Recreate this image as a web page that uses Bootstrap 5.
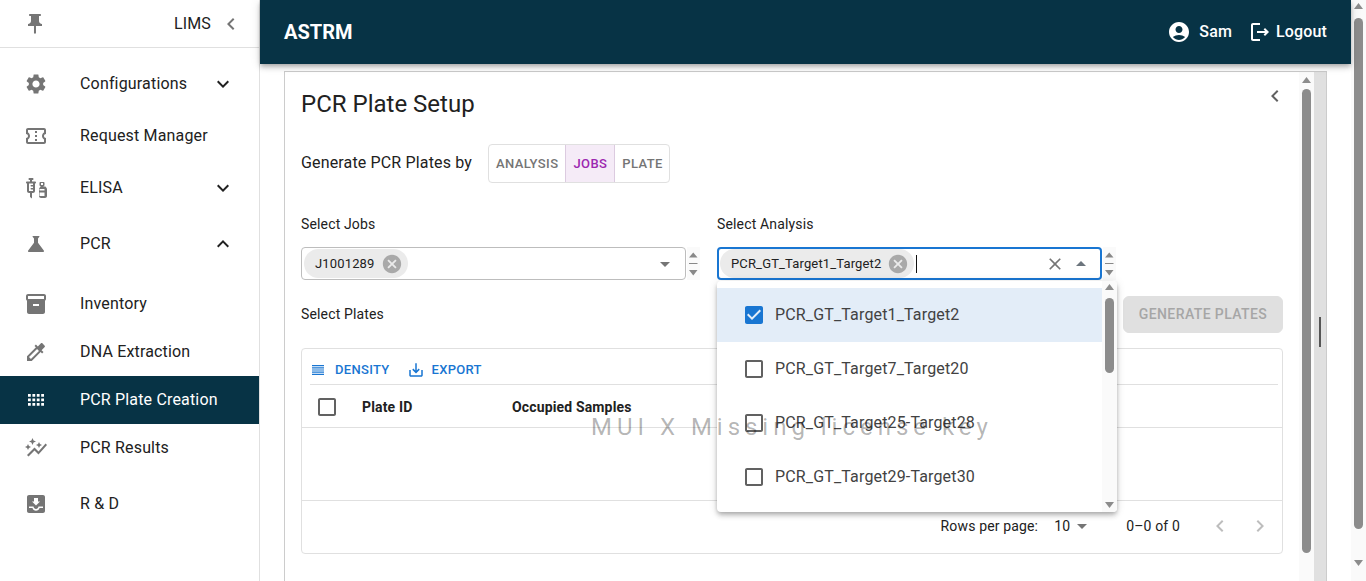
<!DOCTYPE html>
<html lang="en">
<head>
    <meta charset="UTF-8" />
    <title>ASTRM - PCR Plate Setup</title>
    <link href="https://cdn.jsdelivr.net/npm/bootstrap@5.3.3/dist/css/bootstrap.min.css" rel="stylesheet">
    <style>
        html, body { height: 581px; overflow: hidden; }
        body { font-family: Roboto, "Liberation Sans", sans-serif; color: #212121; background: #fff; letter-spacing: .15px; }
        svg { fill: currentColor; flex: none; display: block; }

        /* sidebar */
        .side { width: 260px; flex: none; border-right: 1px solid #e0e0e0; height: 581px; }
        .side-top { height: 48px; border-bottom: 1px solid #e0e0e0; padding: 0 16px 0 23px; color: #757575; }
        .side-top span { color: #212121; margin-left: auto; margin-right: 8px; }
        .side-list { padding-top: 12px; }
        .side-item { height: 48px; padding-left: 24px; padding-right: 24px; color: #212121; text-decoration: none; font-size: 16px; letter-spacing: .17px; }
        .side-item > svg:first-child { color: #757575; margin-right: 32px; }
        .side-item > .side-arrow { margin-left: auto; color: #212121; }
        .gap-a { margin-bottom: 4px; }
        .gap-b { margin-bottom: 8px; }
        .gap-c { margin-bottom: 12px; }
        .side-item.is-on { background: #073345; color: #fff; width: 259px; }
        .side-item.is-on > svg:first-child { color: #fff; }

        /* header */
        .main-col { width: 1091px; flex: none; height: 581px; }
        .top-bar { height: 64px; background: #073345; color: #fff; padding: 0 24px; box-shadow: 0 2px 4px -1px rgba(0,0,0,.2), 0 4px 5px rgba(0,0,0,.14), 0 1px 10px rgba(0,0,0,.12); position: relative; z-index: 2; }
        .brand-txt { font-size: 20px; font-weight: 700; letter-spacing: 0; }
        .top-txt { font-size: 16px; font-weight: 500; }

        /* panel */
        .panel-box { margin: 7px 24px 0; width: 1043px; height: 510px; border: 1px solid #ccc; border-bottom: 0; }
        .panel-body { width: 1014px; flex: none; padding: 0 16px; position: relative; }
        .panel-strip { width: 12px; flex: none; background: #e0e0e0; padding-top: 245px; }
        .panel-strip i { display: block; width: 2px; height: 30px; margin-left: 5px; background: #555; }
        .back-btn { position: absolute; top: 12px; right: 12px; color: #616161; }
        .page-title { font-size: 24px; font-weight: 400; line-height: 32px; margin: 0; padding-top: 16px; color: #212121; letter-spacing: 0; }
        .by-row { margin-top: 24px; height: 39px; }
        .by-label { font-size: 16px; width: 187px; padding-bottom: 2px; }
        .tgl { border: 1px solid #e0e0e0; border-radius: 4px; height: 39px; overflow: hidden; }
        .tgl span { font-size: 13px; font-weight: 500; letter-spacing: .4px; color: #757575; padding: 0 7px; line-height: 37px; }
        .tgl span:last-child { padding-right: 6px; }
        .tgl .tgl-on { color: #9c27b0; background: #f5ebf7; border-left: 1px solid #dccbe0; border-right: 1px solid #dccbe0; }

        .field-row { margin-top: 31px; gap: 16px; position: relative; }
        .field-cell { width: 400px; }
        .field-label { font-size: 14px; line-height: 20px; margin-bottom: 13px; }
        .sel-box { width: 385px; height: 33px; border: 1px solid #bdbdbd; border-radius: 4px; padding-left: 2px; padding-right: 8px; }
        .sel-box.is-open { border: 2px solid #1976d2; padding-left: 1px; padding-right: 7px; }
        .chip-el { background: #ebebeb; border-radius: 15px; height: 29px; font-size: 13px; padding: 0 5px 0 11px; margin-right: 4px; color: #212121; }
        .chip-el svg { color: #a9a9a9; margin-left: 6px; }
        .caret-end { margin-left: auto; color: #757575; }
        .type-cursor { width: 1px; height: 18px; background: #111; margin-left: -2px; }
        .spin-el { width: 13px; color: #888; margin-left: 1px; background: #fafafa; }
        .plates-row { margin-top: 16px; height: 37px; }
        .plates-label { font-size: 14px; }
        .gen-btn { --bs-btn-disabled-bg: #e0e0e0; --bs-btn-disabled-border-color: #e0e0e0; --bs-btn-disabled-color: #a6a6a6; --bs-btn-disabled-opacity: 1; font-size: 14px; font-weight: 500; letter-spacing: .4px; width: 160px; height: 37px; padding: 0; margin-left: auto; margin-right: 0; }

        /* data grid */
        .grid-box { margin-top: 15px; width: 982px; height: 206px; border: 1px solid #e0e0e0; border-radius: 4px; }
        .grid-tools { height: 36px; margin: 0 4px 0 8px; padding-top: 7px; border-bottom: 1px solid #e0e0e0; gap: 17px; color: #1976d2; font-size: 13px; font-weight: 500; letter-spacing: .3px; }
        .grid-tools div { gap: 7px; }
        .grid-head { height: 43px; border-bottom: 1px solid #e0e0e0; font-size: 14px; font-weight: 700; padding-left: 13px; padding-top: 2px; }
        .grid-head svg { color: #616161; }
        .head-a { margin-left: 23px; width: 150px; }
        .grid-empty { height: 73px; border-bottom: 1px solid #e0e0e0; }
        .grid-foot { height: 52px; font-size: 14px; padding-right: 10px; padding-bottom: 2px; justify-content: flex-end; }
        .pp-num { margin-left: 16px; }
        .pp-caret { color: #757575; margin-left: 0; margin-right: 32px; }
        .pg-range { margin-right: 28px; }
        .pg-arrows { gap: 16px; color: #bdbdbd; }

        /* dropdown */
        .drop-menu { position: absolute; left: 416px; top: 67px; width: 400px; height: 231px; background: #fff; border-radius: 4px; box-shadow: 0 2px 4px -1px rgba(0,0,0,.2), 0 4px 5px rgba(0,0,0,.14), 0 1px 10px rgba(0,0,0,.12); z-index: 3; overflow: hidden; }
        .drop-list { width: 385px; flex: none; padding-top: 7px; }
        .drop-row { height: 54px; padding-left: 25px; gap: 9px; font-size: 16px; color: #424242; }
        .drop-row svg { color: #616161; }
        .drop-row.is-sel { background: #e3edf8; }
        .drop-row.is-sel svg { color: #1976d2; }

        /* scrollbars */
        .bar-track { width: 15px; flex: none; background: #fafafa; color: #8c8c8c; }
        .bar-thumb { width: 9px; background: #8c8c8c; border-radius: 5px; margin: 0 auto; }
        .bar-page { height: 581px; padding-top: 2px; }
        .bar-page .bar-thumb { height: 511px; margin-top: 8px; }
        .bar-panel { height: 510px; padding-top: 4px; }
        .bar-panel .bar-thumb { height: 464px; margin-top: 5px; }
        .bar-drop { height: 231px; padding-top: 2px; }
        .bar-drop .bar-thumb { height: 75px; margin-top: 7px; }
        .bar-drop > svg:last-child { margin: 128px auto 0; }
        .bar-page > svg:last-child { margin: 30px auto 0; }
        .bar-track svg { margin-left: auto; margin-right: auto; }

        .wm-text { position: absolute; left: 591px; top: 412px; font-size: 24px; letter-spacing: 4.98px; color: rgba(0,0,0,.3); z-index: 5; white-space: nowrap; pointer-events: none; line-height: 30px; }
    </style>
</head>
<body class="d-flex">
    <!-- Sidebar -->
    <aside class="side">
        <div class="side-top d-flex align-items-center">
            <svg width="24" height="24" viewBox="0 0 24 24"><path d="M16 9V4h1c.55 0 1-.45 1-1s-.45-1-1-1H7c-.55 0-1 .45-1 1s.45 1 1 1h1v5c0 1.66-1.34 3-3 3v2h5.97v7l1 1 1-1v-7H19v-2c-1.66 0-3-1.34-3-3z"/></svg>
            <span>LIMS</span>
            <svg width="24" height="24" viewBox="0 0 24 24"><path d="M15.41 7.41 14 6l-6 6 6 6 1.41-1.41L10.83 12z"/></svg>
        </div>
        <div class="side-list">
            <a class="side-item gap-a d-flex align-items-center" href="#">
                <svg width="24" height="24" viewBox="0 0 24 24"><path d="M19.14 12.94c.04-.3.06-.61.06-.94 0-.32-.02-.64-.07-.94l2.03-1.58c.18-.14.23-.41.12-.61l-1.92-3.32c-.12-.22-.37-.29-.59-.22l-2.39.96c-.5-.38-1.03-.7-1.62-.94l-.36-2.54c-.04-.24-.24-.41-.48-.41h-3.84c-.24 0-.43.17-.47.41l-.36 2.54c-.59.24-1.13.57-1.62.94l-2.39-.96c-.22-.08-.47 0-.59.22L2.74 8.87c-.12.21-.08.47.12.61l2.03 1.58c-.05.3-.09.63-.09.94s.02.64.07.94l-2.03 1.58c-.18.14-.23.41-.12.61l1.92 3.32c.12.22.37.29.59.22l2.39-.96c.5.38 1.03.7 1.62.94l.36 2.54c.05.24.24.41.48.41h3.84c.24 0 .44-.17.47-.41l.36-2.54c.59-.24 1.13-.56 1.62-.94l2.39.96c.22.08.47 0 .59-.22l1.92-3.32c.12-.22.07-.47-.12-.61l-2.01-1.58zM12 15.6c-1.98 0-3.6-1.62-3.6-3.6s1.62-3.6 3.6-3.6 3.6 1.62 3.6 3.6-1.62 3.6-3.6 3.6z"/></svg>
                Configurations
                <svg class="side-arrow" width="24" height="24" viewBox="0 0 24 24"><path d="M16.59 8.59 12 13.17 7.41 8.59 6 10l6 6 6-6z"/></svg>
            </a>
            <a class="side-item gap-a d-flex align-items-center" href="#">
                <svg width="24" height="24" viewBox="0 0 24 24"><path d="M22 10V6c0-1.11-.9-2-2-2H4c-1.1 0-1.99.89-1.99 2v4c1.1 0 1.99.9 1.99 2s-.89 2-2 2v4c0 1.1.9 2 2 2h16c1.1 0 2-.9 2-2v-4c-1.1 0-2-.9-2-2s.9-2 2-2zm-2-1.46c-1.19.69-2 1.99-2 3.46s.81 2.77 2 3.46V18H4v-2.54c1.19-.69 2-1.99 2-3.46 0-1.48-.8-2.77-1.99-3.46L4 6h16v2.54zM11 15h2v2h-2zm0-4h2v2h-2zm0-4h2v2h-2z"/></svg>
                Request Manager
            </a>
            <a class="side-item gap-b d-flex align-items-center" href="#">
                <svg width="24" height="24" viewBox="0 0 24 24"><path d="M11 5.5H8V4h.5c.55 0 1-.45 1-1s-.45-1-1-1h-3c-.55 0-1 .45-1 1s.45 1 1 1H6v1.5H3c-.55 0-1 .45-1 1s.45 1 1 1V15c0 1.1.9 2 2 2h1v4l2 1.5V17h1c1.1 0 2-.9 2-2V7.5c.55 0 1-.45 1-1s-.45-1-1-1zM9 9H7.25c-.41 0-.75.34-.75.75s.34.75.75.75H9v1.5H7.25c-.41 0-.75.34-.75.75s.34.75.75.75H9V15H5V7.5h4V9zm10.5 1.5V10c.55 0 1-.45 1-1V7c0-.55-.45-1-1-1h-3c-.55 0-1 .45-1 1v2c0 .55.45 1 1 1v.5c0 .5-1.5 1.16-1.5 3V20c0 1.1.9 2 2 2h4c1.1 0 2-.9 2-2v-6.5c0-1.84-1.5-2.5-1.5-3zM17 7h2v2h-2V7zm-1.5 6h5v1.5h-5V13zm0 3.5h5V20h-5v-3.5z"/></svg>
                ELISA
                <svg class="side-arrow" width="24" height="24" viewBox="0 0 24 24"><path d="M16.59 8.59 12 13.17 7.41 8.59 6 10l6 6 6-6z"/></svg>
            </a>
            <a class="side-item gap-c d-flex align-items-center" href="#">
                <svg width="24" height="24" viewBox="0 0 24 24"><path d="M19.8 18.4 14 10.67V6.5l1.35-1.69c.26-.33.03-.81-.39-.81H9.04c-.42 0-.65.48-.39.81L10 6.5v4.17L4.2 18.4c-.49.66-.02 1.6.8 1.6h14c.82 0 1.29-.94.8-1.6z"/></svg>
                PCR
                <svg class="side-arrow" width="24" height="24" viewBox="0 0 24 24"><path d="m12 8-6 6 1.41 1.41L12 10.83l4.59 4.58L18 14z"/></svg>
            </a>
            <a class="side-item d-flex align-items-center" href="#">
                <svg width="24" height="24" viewBox="0 0 24 24"><path d="M20 2H4c-1 0-2 .9-2 2v3.01c0 .72.43 1.34 1 1.69V20c0 1.1 1.1 2 2 2h14c.9 0 2-.9 2-2V8.7c.57-.35 1-.97 1-1.69V4c0-1.1-1-2-2-2zm-5 12H9v-2h6v2zm5-7H4V4l16-.02V7z"/></svg>
                Inventory
            </a>
            <a class="side-item d-flex align-items-center" href="#">
                <svg width="24" height="24" viewBox="0 0 24 24"><path d="M20.71 5.63l-2.34-2.34c-.39-.39-1.02-.39-1.41 0l-3.12 3.12-1.93-1.91-1.41 1.41 1.42 1.42L3 16.25V21h4.75l8.92-8.92 1.42 1.42 1.41-1.41-1.92-1.92 3.12-3.12c.4-.4.4-1.03.01-1.42zM6.92 19 5 17.08l8.06-8.06 1.92 1.92L6.92 19z"/></svg>
                DNA Extraction
            </a>
            <a class="side-item is-on d-flex align-items-center" href="#">
                <svg width="24" height="24" viewBox="0 0 24 24"><path d="M4 6h2.800v2.800H4zm4.400 0h2.800v2.800H8.400zm4.400 0h2.800v2.800h-2.800zm4.400 0H20v2.800h-2.800zM4 10.500h2.800v2.800H4zm4.400 0h2.800v2.800H8.400zm4.400 0h2.800v2.800h-2.800zm4.400 0H20v2.800h-2.800zM4 15h2.800v2.800H4zm4.400 0h2.800v2.800H8.400zm4.400 0h2.800v2.800h-2.800zm4.400 0H20v2.800h-2.800z"/></svg>
                PCR Plate Creation
            </a>
            <a class="side-item gap-b d-flex align-items-center" href="#">
                <svg width="24" height="24" viewBox="0 0 24 24"><path d="M14.06 9.94 12 9l2.06-.94L15 6l.94 2.06L18 9l-2.06.94L15 12l-.94-2.06zM4 14l.94-2.06L7 11l-2.06-.94L4 8l-.94 2.06L1 11l2.06.94L4 14zm4.5-5 1.09-2.41L12 5.5 9.59 4.41 8.5 2 7.41 4.41 5 5.5l2.41 1.09L8.5 9zm-4 11.5 6-6.01 4 4L23 8.93l-1.41-1.41-7.09 7.97-4-4L3 19l1.5 1.5z"/></svg>
                PCR Results
            </a>
            <a class="side-item d-flex align-items-center" href="#">
                <svg width="24" height="24" viewBox="0 0 24 24"><path fill-rule="evenodd" d="M19 3H4.99c-1.11 0-1.98.9-1.98 2L3 19c0 1.1.88 2 1.99 2H19c1.1 0 2-.9 2-2V5c0-1.1-.9-2-2-2zm-3 6.500h-2V6h-4v3.500H8l4 4 4-4zM5 14.500h4.500c.2 1.500 1.200 2.500 2.500 2.500s2.300-1 2.500-2.500H19V16h-3.500c-.5 1.700-1.800 2.700-3.500 2.700s-3-1-3.500-2.700H5z"/></svg>
                R &amp; D
            </a>
        </div>
    </aside>

    <div class="main-col">
        <header class="top-bar d-flex align-items-center">
            <span class="brand-txt">ASTRM</span>
            <svg class="ms-auto" width="24" height="24" viewBox="0 0 24 24"><path d="M12 2C6.48 2 2 6.48 2 12s4.48 10 10 10 10-4.48 10-10S17.52 2 12 2zm0 4c1.93 0 3.5 1.57 3.5 3.5S13.93 13 12 13s-3.5-1.57-3.5-3.5S10.07 6 12 6zm0 14c-2.03 0-4.43-.82-6.14-2.88C7.55 15.8 9.68 15 12 15s4.45.8 6.14 2.12C16.43 19.18 14.03 20 12 20z"/></svg>
            <span class="top-txt ms-2 me-3">Sam</span>
            <svg width="24" height="24" viewBox="0 0 24 24"><path d="M17 8l-1.41 1.41L17.17 11H9v2h8.17l-1.58 1.58L17 16l4-4-4-4zM5 5h7V3H5c-1.1 0-2 .9-2 2v14c0 1.1.9 2 2 2h7v-2H5V5z"/></svg>
            <span class="top-txt ms-1">Logout</span>
        </header>

        <div class="panel-box d-flex">
            <section class="panel-body">
                <svg class="back-btn" width="24" height="24" viewBox="0 0 24 24"><path d="M15.41 7.41 14 6l-6 6 6 6 1.41-1.41L10.83 12z"/></svg>
                <h1 class="page-title">PCR Plate Setup</h1>

                <div class="by-row d-flex align-items-center">
                    <div class="by-label">Generate PCR Plates by</div>
                    <div class="tgl d-flex">
                        <span>ANALYSIS</span>
                        <span class="tgl-on">JOBS</span>
                        <span>PLATE</span>
                    </div>
                </div>

                <div class="field-row d-flex">
                    <div class="field-cell">
                        <div class="field-label">Select Jobs</div>
                        <div class="d-flex align-items-center">
                            <div class="sel-box d-flex align-items-center">
                                <div class="chip-el d-flex align-items-center">J1001289
                                    <svg width="22" height="22" viewBox="0 0 24 24"><path d="M12 2C6.47 2 2 6.47 2 12s4.47 10 10 10 10-4.47 10-10S17.53 2 12 2zm5 13.59L15.59 17 12 13.41 8.41 17 7 15.59 10.59 12 7 8.41 8.41 7 12 10.59 15.59 7 17 8.41 13.41 12 17 15.59z"/></svg>
                                </div>
                                <svg class="caret-end" width="24" height="24" viewBox="0 0 24 24"><path d="M7 10l5 5 5-5z"/></svg>
                            </div>
                            <svg class="spin-el" width="13" height="33" viewBox="0 0 13 33"><path d="M2 10.500l4.250-5 4.250 5zM2 16h8.500v1H2zM2 23h8.500l-4.250 5.500z"/></svg>
                        </div>
                    </div>
                    <div class="field-cell">
                        <div class="field-label">Select Analysis</div>
                        <div class="d-flex align-items-center">
                            <div class="sel-box is-open d-flex align-items-center">
                                <div class="chip-el d-flex align-items-center">PCR_GT_Target1_Target2
                                    <svg width="22" height="22" viewBox="0 0 24 24"><path d="M12 2C6.47 2 2 6.47 2 12s4.47 10 10 10 10-4.47 10-10S17.53 2 12 2zm5 13.59L15.59 17 12 13.41 8.41 17 7 15.59 10.59 12 7 8.41 8.41 7 12 10.59 15.59 7 17 8.41 13.41 12 17 15.59z"/></svg>
                                </div>
                                <div class="type-cursor"></div>
                                <svg class="caret-end" width="20" height="20" viewBox="0 0 24 24"><path d="M19 6.41 17.59 5 12 10.59 6.41 5 5 6.41 10.59 12 5 17.59 6.41 19 12 13.41 17.59 19 19 17.59 13.41 12z"/></svg>
                                <svg class="ms-1 text-secondary" width="24" height="24" viewBox="0 0 24 24"><path d="m7 14 5-5 5 5z"/></svg>
                            </div>
                            <svg class="spin-el" width="13" height="33" viewBox="0 0 13 33"><path d="M2 10.500l4.250-5 4.250 5zM2 16h8.500v1H2zM2 23h8.500l-4.250 5.500z"/></svg>
                        </div>
                    </div>

                    <!-- open autocomplete menu -->
                    <div class="drop-menu d-flex">
                        <div class="drop-list">
                            <div class="drop-row is-sel d-flex align-items-center">
                                <svg width="24" height="24" viewBox="0 0 24 24"><path d="M19 3H5c-1.110 0-2 .9-2 2v14c0 1.100.89 2 2 2h14c1.110 0 2-.9 2-2V5c0-1.100-.89-2-2-2zm-9 14l-5-5 1.410-1.410L10 14.170l7.590-7.590L19 8l-9 9z"/></svg>
                                PCR_GT_Target1_Target2
                            </div>
                            <div class="drop-row d-flex align-items-center">
                                <svg width="24" height="24" viewBox="0 0 24 24"><path d="M19 5v14H5V5h14m0-2H5c-1.100 0-2 .9-2 2v14c0 1.100.9 2 2 2h14c1.100 0 2-.9 2-2V5c0-1.100-.9-2-2-2z"/></svg>
                                PCR_GT_Target7_Target20
                            </div>
                            <div class="drop-row d-flex align-items-center">
                                <svg width="24" height="24" viewBox="0 0 24 24"><path d="M19 5v14H5V5h14m0-2H5c-1.100 0-2 .9-2 2v14c0 1.100.9 2 2 2h14c1.100 0 2-.9 2-2V5c0-1.100-.9-2-2-2z"/></svg>
                                PCR_GT_Target25-Target28
                            </div>
                            <div class="drop-row d-flex align-items-center">
                                <svg width="24" height="24" viewBox="0 0 24 24"><path d="M19 5v14H5V5h14m0-2H5c-1.100 0-2 .9-2 2v14c0 1.100.9 2 2 2h14c1.100 0 2-.9 2-2V5c0-1.100-.9-2-2-2z"/></svg>
                                PCR_GT_Target29-Target30
                            </div>
                        </div>
                        <div class="bar-track bar-drop">
                            <svg width="13" height="8" viewBox="0 0 11 8"><path d="M1 7l4.500-6 4.500 6z"/></svg>
                            <div class="bar-thumb"></div>
                            <svg width="13" height="8" viewBox="0 0 11 8"><path d="M1 1h9l-4.500 6z"/></svg>
                        </div>
                    </div>
                </div>

                <div class="plates-row d-flex align-items-center">
                    <div class="plates-label">Select Plates</div>
                    <button class="btn gen-btn" disabled>GENERATE PLATES</button>
                </div>

                <div class="grid-box">
                    <div class="grid-tools d-flex align-items-center">
                        <div class="d-flex align-items-center">
                            <svg width="18" height="18" viewBox="0 0 18 18"><path d="M2 4h12v1.200H2zM2 6.200h12v1.200H2zM2 8.400h12v1.200H2zM2 10.600h12v1.200H2zM2 12.800h12V14H2z"/></svg>
                            DENSITY
                        </div>
                        <div class="d-flex align-items-center">
                            <svg width="18" height="18" viewBox="0 0 24 24"><path d="M19 12v7H5v-7H3v7c0 1.100.9 2 2 2h14c1.100 0 2-.9 2-2v-7h-2zm-6 .67l2.590-2.580L17 11.500l-5 5-5-5 1.410-1.410L11 12.670V3h2z"/></svg>
                            EXPORT
                        </div>
                    </div>
                    <div class="grid-head d-flex align-items-center">
                        <svg width="24" height="24" viewBox="0 0 24 24"><path d="M19 5v14H5V5h14m0-2H5c-1.100 0-2 .9-2 2v14c0 1.100.9 2 2 2h14c1.100 0 2-.9 2-2V5c0-1.100-.9-2-2-2z"/></svg>
                        <div class="head-a">Plate ID</div>
                        <div>Occupied Samples</div>
                    </div>
                    <div class="grid-empty"></div>
                    <div class="grid-foot d-flex align-items-center">
                        <span>Rows per page:</span>
                        <span class="pp-num">10</span>
                        <svg class="pp-caret" width="24" height="24" viewBox="0 0 24 24"><path d="M7 10l5 5 5-5z"/></svg>
                        <span class="pg-range">0–0 of 0</span>
                        <div class="pg-arrows d-flex">
                            <svg width="24" height="24" viewBox="0 0 24 24"><path d="M15.41 7.41 14 6l-6 6 6 6 1.41-1.41L10.83 12z"/></svg>
                            <svg width="24" height="24" viewBox="0 0 24 24"><path d="M10 6 8.590 7.410 13.170 12l-4.580 4.590L10 18l6-6z"/></svg>
                        </div>
                    </div>
                </div>
            </section>
            <div class="bar-track bar-panel">
                <svg width="13" height="8" viewBox="0 0 11 8"><path d="M1 7l4.500-6 4.500 6z"/></svg>
                <div class="bar-thumb"></div>
            </div>
            <div class="panel-strip"><i></i></div>
        </div>
    </div>

    <div class="bar-track bar-page">
        <svg width="13" height="8" viewBox="0 0 11 8"><path d="M1 7l4.500-6 4.500 6z"/></svg>
        <div class="bar-thumb"></div>
        <svg width="13" height="8" viewBox="0 0 11 8"><path d="M1 1h9l-4.500 6z"/></svg>
    </div>

    <div class="wm-text">MUI X Missing license key</div>

    <script src="https://cdn.jsdelivr.net/npm/bootstrap@5.3.3/dist/js/bootstrap.bundle.min.js"></script>
</body>
</html>
